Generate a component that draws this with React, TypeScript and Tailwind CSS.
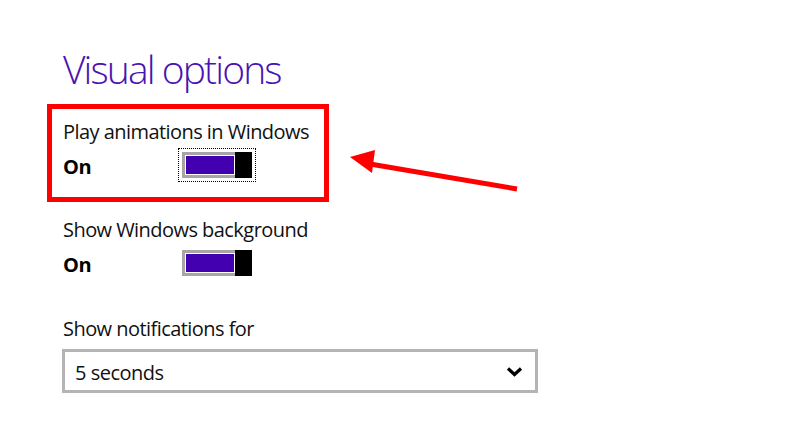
import React from "react";

function Toggle({ focused }: { focused?: boolean }) {
  return (
    <div
      className={`flex h-[26px] w-[70px] ${
        focused ? "outline outline-1 outline-dotted outline-black outline-offset-[3px]" : ""
      }`}
    >
      <div className="flex-1 border-[3px] border-r-0 border-[#a6a6a6]">
        <div className="h-full w-full border border-white bg-[#4200b0]" />
      </div>
      <div className="w-[17px] bg-black" />
    </div>
  );
}

function ToggleRow({ label, focused }: { label: string; focused?: boolean }) {
  return (
    <div className="flex flex-col">
      <p className="text-[20px] leading-[24px] tracking-[-0.55px] text-[#111]">{label}</p>
      <div className="mt-[8px] flex h-[26px] items-center">
        <span className="w-[119px] pt-[3px] text-[20px] font-bold leading-[26px] tracking-[-0.4px] text-black">
          On
        </span>
        <Toggle focused={focused} />
      </div>
    </div>
  );
}

export default function App() {
  return (
    <main
      className="relative h-[428px] w-[788px] overflow-hidden bg-white"
      style={{ fontFamily: '"Open Sans", "Noto Sans", sans-serif' }}
    >
      <div className="flex flex-col pl-[63px] pt-[45px]">
        <h1 className="text-[39px] font-light leading-[48px] tracking-[-1.9px] text-[#4b12b3]">Visual options</h1>

        <div className="mt-[27px]">
          <ToggleRow label="Play animations in Windows" focused />
        </div>

        <div className="mt-[40px]">
          <ToggleRow label="Show Windows background" />
        </div>

        <p className="mt-[41px] text-[20px] leading-[24px] tracking-[-0.55px] text-[#111]">Show notifications for</p>

        <div className="ml-[-1px] mt-[8px] flex h-[44px] w-[476px] items-center justify-between border-[3px] border-[#b4b4b4] pl-[10px] pr-[12px]">
          <span className="pt-[3px] text-[20px] leading-[24px] tracking-[-0.5px] text-[#111]">5 seconds</span>
          <svg width="17" height="11" viewBox="0 0 17 11">
            <path d="M2 2.5 L8.5 8.5 L15 2.5" fill="none" stroke="black" strokeWidth="3.2" />
          </svg>
        </div>
      </div>

      {/* annotation overlay */}
      <div className="absolute left-[47px] top-[104px] h-[98px] w-[282px] border-[5px] border-[#ff0000]" />
      <svg className="absolute left-0 top-0" width="788" height="428" viewBox="0 0 788 428">
        <line x1="370" y1="164" x2="517" y2="189" stroke="#ff0000" strokeWidth="5" />
        <polygon points="350,157 375,150 372,173" fill="#ff0000" />
      </svg>
    </main>
  );
}
